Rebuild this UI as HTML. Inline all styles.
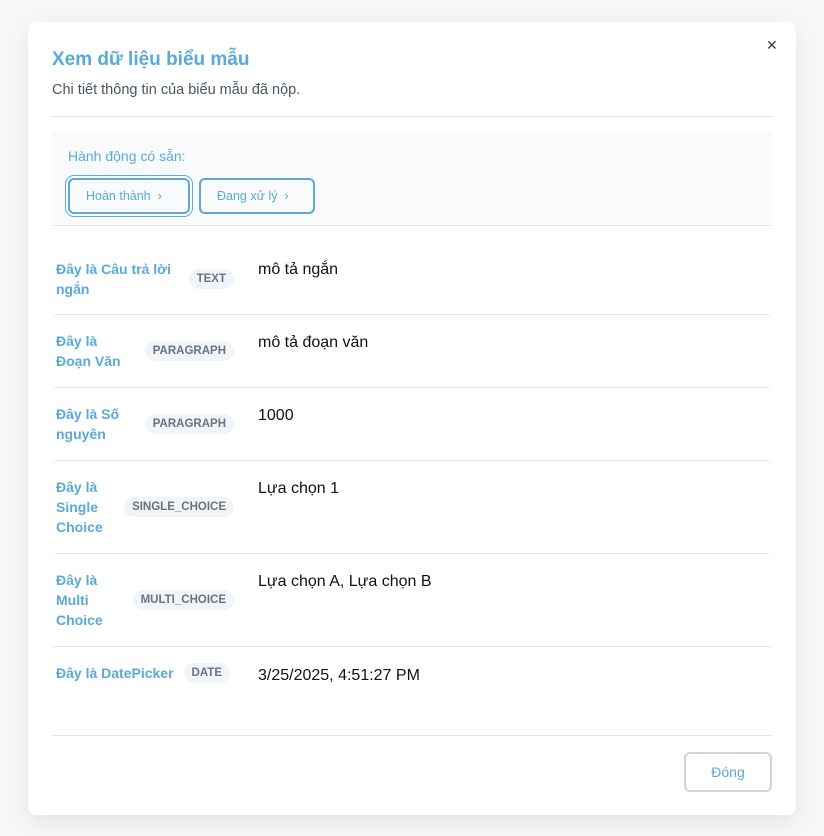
<!DOCTYPE html>
<html><head><meta charset="utf-8"><style>
*{box-sizing:border-box;margin:0;padding:0}
body{width:824px;height:836px;background:#f6f7f8;font-family:"Liberation Sans",sans-serif;position:relative;overflow:hidden}
.modal{position:absolute;left:28px;top:22px;width:768px;height:793px;background:#fff;border-radius:8px;box-shadow:0 8px 24px rgba(0,0,0,.08)}
.title{position:absolute;left:24px;top:27px;font-size:19px;font-weight:bold;color:#5aa9d6}
.sub{position:absolute;left:24px;top:60px;font-size:14.5px;color:#4b5563}
.close{position:absolute;left:738px;top:15px;font-size:14px;color:#374151}
.hr{position:absolute;left:24px;width:720px;height:1px;background:#e5e7eb}
.act{position:absolute;left:24px;top:110px;width:720px;height:94px;background:#f8fafc;border-bottom:1px solid #e5e7eb}
.act .l{position:absolute;left:16px;top:16px;font-size:14px;color:#5aa9d6}
.btn{position:absolute;top:46px;height:36px;border:2px solid #5aa9d6;border-radius:6px;font-size:12.5px;color:#5aa9d6;line-height:32px;padding-left:16px}
.row{position:absolute;left:24px;width:720px;border-top:1px solid #e5e7eb;border-radius:6px 6px 0 0}
.row.nb{border-top:none}
.lab{position:absolute;left:4px;font-size:14px;font-weight:bold;color:#5aa9d6;line-height:20px}
.badge{position:absolute;right:538px;height:20px;padding:0 8px;background:#f1f4f8;border-radius:10px;font-size:11.5px;font-weight:bold;color:#6b7280;line-height:20px}
.val{position:absolute;left:206px;font-size:16px;color:#111;line-height:20px}
.foot{position:absolute;left:656px;top:730px;width:88px;height:40px;border:2px solid #d1d5db;border-radius:6px;text-align:center;line-height:36px;font-size:14px;color:#5aa9d6}
</style></head><body>
<div class="modal">
<div class="title">Xem dữ liệu biểu mẫu</div>
<div class="sub">Chi tiết thông tin của biểu mẫu đã nộp.</div>
<div class="close">✕</div>
<div class="hr" style="top:94px"></div>
<div class="act"><div class="l">Hành động có sẵn:</div>
<div class="btn" style="left:16px;width:122px;box-shadow:0 0 0 2px #fff,0 0 0 3px #5aa9d6">Hoàn thành &nbsp;›</div>
<div class="btn" style="left:147px;width:116px">Đang xử lý &nbsp;›</div></div>

<div class="row nb" style="top:221px;height:71px">
<div class="lab" style="top:16px">Đây là Câu trả lời<br>ngắn</div><div class="badge" style="top:26px">TEXT</div><div class="val" style="top:17px">mô tả ngắn</div></div>
<div class="row" style="top:292px;height:73px">
<div class="lab" style="top:16px">Đây là<br>Đoạn Văn</div><div class="badge" style="top:26px">PARAGRAPH</div><div class="val" style="top:18px">mô tả đoạn văn</div></div>
<div class="row" style="top:365px;height:73px">
<div class="lab" style="top:16px">Đây là Số<br>nguyên</div><div class="badge" style="top:26px">PARAGRAPH</div><div class="val" style="top:18px">1000</div></div>
<div class="row" style="top:438px;height:93px">
<div class="lab" style="top:16px">Đây là<br>Single<br>Choice</div><div class="badge" style="top:36px">SINGLE_CHOICE</div><div class="val" style="top:18px">Lựa chọn 1</div></div>
<div class="row" style="top:531px;height:93px">
<div class="lab" style="top:16px">Đây là<br>Multi<br>Choice</div><div class="badge" style="top:36px">MULTI_CHOICE</div><div class="val" style="top:18px">Lựa chọn A, Lựa chọn B</div></div>
<div class="row" style="top:624px;height:60px">
<div class="lab" style="top:16px">Đây là DatePicker</div><div class="badge" style="top:16px;right:542px">DATE</div><div class="val" style="top:19px">3/25/2025, 4:51:27 PM</div></div>

<div class="hr" style="top:713px"></div>
<div class="foot">Đóng</div>
</div>
</body></html>
